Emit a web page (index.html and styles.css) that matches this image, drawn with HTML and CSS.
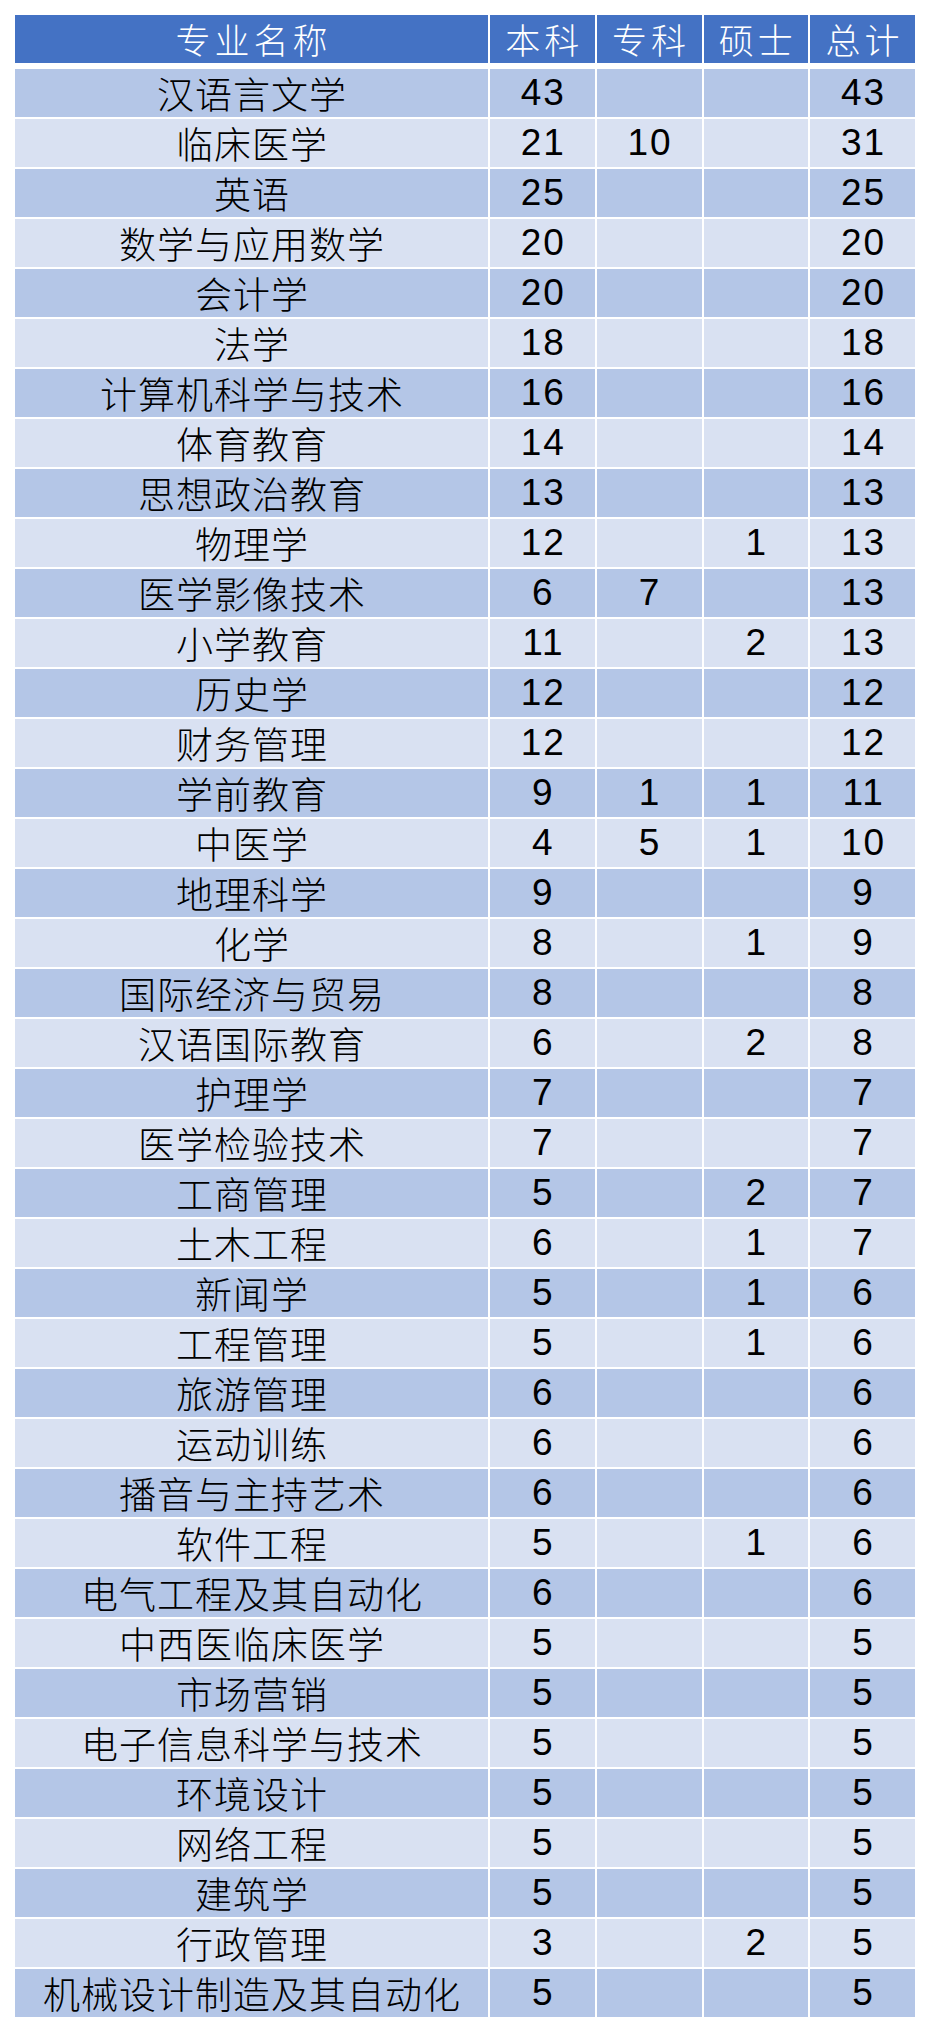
FILE: index.html
```html
<!DOCTYPE html>
<html lang="zh-CN">
<head>
<meta charset="utf-8">
<title>专业人数统计</title>
<link rel="stylesheet" href="styles.css">
</head>
<body>
<div class="table">
  <div class="cell head name">专业名称</div><div class="cell head">本科</div><div class="cell head">专科</div><div class="cell head">硕士</div><div class="cell head">总计</div>

  <div class="cell odd name">汉语言文学</div><div class="cell odd num">43</div><div class="cell odd num"></div><div class="cell odd num"></div><div class="cell odd num">43</div>
  <div class="cell even name">临床医学</div><div class="cell even num">21</div><div class="cell even num">10</div><div class="cell even num"></div><div class="cell even num">31</div>
  <div class="cell odd name">英语</div><div class="cell odd num">25</div><div class="cell odd num"></div><div class="cell odd num"></div><div class="cell odd num">25</div>
  <div class="cell even name">数学与应用数学</div><div class="cell even num">20</div><div class="cell even num"></div><div class="cell even num"></div><div class="cell even num">20</div>
  <div class="cell odd name">会计学</div><div class="cell odd num">20</div><div class="cell odd num"></div><div class="cell odd num"></div><div class="cell odd num">20</div>
  <div class="cell even name">法学</div><div class="cell even num">18</div><div class="cell even num"></div><div class="cell even num"></div><div class="cell even num">18</div>
  <div class="cell odd name">计算机科学与技术</div><div class="cell odd num">16</div><div class="cell odd num"></div><div class="cell odd num"></div><div class="cell odd num">16</div>
  <div class="cell even name">体育教育</div><div class="cell even num">14</div><div class="cell even num"></div><div class="cell even num"></div><div class="cell even num">14</div>
  <div class="cell odd name">思想政治教育</div><div class="cell odd num">13</div><div class="cell odd num"></div><div class="cell odd num"></div><div class="cell odd num">13</div>
  <div class="cell even name">物理学</div><div class="cell even num">12</div><div class="cell even num"></div><div class="cell even num">1</div><div class="cell even num">13</div>
  <div class="cell odd name">医学影像技术</div><div class="cell odd num">6</div><div class="cell odd num">7</div><div class="cell odd num"></div><div class="cell odd num">13</div>
  <div class="cell even name">小学教育</div><div class="cell even num">11</div><div class="cell even num"></div><div class="cell even num">2</div><div class="cell even num">13</div>
  <div class="cell odd name">历史学</div><div class="cell odd num">12</div><div class="cell odd num"></div><div class="cell odd num"></div><div class="cell odd num">12</div>
  <div class="cell even name">财务管理</div><div class="cell even num">12</div><div class="cell even num"></div><div class="cell even num"></div><div class="cell even num">12</div>
  <div class="cell odd name">学前教育</div><div class="cell odd num">9</div><div class="cell odd num">1</div><div class="cell odd num">1</div><div class="cell odd num">11</div>
  <div class="cell even name">中医学</div><div class="cell even num">4</div><div class="cell even num">5</div><div class="cell even num">1</div><div class="cell even num">10</div>
  <div class="cell odd name">地理科学</div><div class="cell odd num">9</div><div class="cell odd num"></div><div class="cell odd num"></div><div class="cell odd num">9</div>
  <div class="cell even name">化学</div><div class="cell even num">8</div><div class="cell even num"></div><div class="cell even num">1</div><div class="cell even num">9</div>
  <div class="cell odd name">国际经济与贸易</div><div class="cell odd num">8</div><div class="cell odd num"></div><div class="cell odd num"></div><div class="cell odd num">8</div>
  <div class="cell even name">汉语国际教育</div><div class="cell even num">6</div><div class="cell even num"></div><div class="cell even num">2</div><div class="cell even num">8</div>
  <div class="cell odd name">护理学</div><div class="cell odd num">7</div><div class="cell odd num"></div><div class="cell odd num"></div><div class="cell odd num">7</div>
  <div class="cell even name">医学检验技术</div><div class="cell even num">7</div><div class="cell even num"></div><div class="cell even num"></div><div class="cell even num">7</div>
  <div class="cell odd name">工商管理</div><div class="cell odd num">5</div><div class="cell odd num"></div><div class="cell odd num">2</div><div class="cell odd num">7</div>
  <div class="cell even name">土木工程</div><div class="cell even num">6</div><div class="cell even num"></div><div class="cell even num">1</div><div class="cell even num">7</div>
  <div class="cell odd name">新闻学</div><div class="cell odd num">5</div><div class="cell odd num"></div><div class="cell odd num">1</div><div class="cell odd num">6</div>
  <div class="cell even name">工程管理</div><div class="cell even num">5</div><div class="cell even num"></div><div class="cell even num">1</div><div class="cell even num">6</div>
  <div class="cell odd name">旅游管理</div><div class="cell odd num">6</div><div class="cell odd num"></div><div class="cell odd num"></div><div class="cell odd num">6</div>
  <div class="cell even name">运动训练</div><div class="cell even num">6</div><div class="cell even num"></div><div class="cell even num"></div><div class="cell even num">6</div>
  <div class="cell odd name">播音与主持艺术</div><div class="cell odd num">6</div><div class="cell odd num"></div><div class="cell odd num"></div><div class="cell odd num">6</div>
  <div class="cell even name">软件工程</div><div class="cell even num">5</div><div class="cell even num"></div><div class="cell even num">1</div><div class="cell even num">6</div>
  <div class="cell odd name">电气工程及其自动化</div><div class="cell odd num">6</div><div class="cell odd num"></div><div class="cell odd num"></div><div class="cell odd num">6</div>
  <div class="cell even name">中西医临床医学</div><div class="cell even num">5</div><div class="cell even num"></div><div class="cell even num"></div><div class="cell even num">5</div>
  <div class="cell odd name">市场营销</div><div class="cell odd num">5</div><div class="cell odd num"></div><div class="cell odd num"></div><div class="cell odd num">5</div>
  <div class="cell even name">电子信息科学与技术</div><div class="cell even num">5</div><div class="cell even num"></div><div class="cell even num"></div><div class="cell even num">5</div>
  <div class="cell odd name">环境设计</div><div class="cell odd num">5</div><div class="cell odd num"></div><div class="cell odd num"></div><div class="cell odd num">5</div>
  <div class="cell even name">网络工程</div><div class="cell even num">5</div><div class="cell even num"></div><div class="cell even num"></div><div class="cell even num">5</div>
  <div class="cell odd name">建筑学</div><div class="cell odd num">5</div><div class="cell odd num"></div><div class="cell odd num"></div><div class="cell odd num">5</div>
  <div class="cell even name">行政管理</div><div class="cell even num">3</div><div class="cell even num"></div><div class="cell even num">2</div><div class="cell even num">5</div>
  <div class="cell odd name">机械设计制造及其自动化</div><div class="cell odd num">5</div><div class="cell odd num"></div><div class="cell odd num"></div><div class="cell odd num">5</div>
</div>
</body>
</html>
```

FILE: styles.css
```css
html, body {
  margin: 0;
  padding: 0;
  background: #ffffff;
}

body {
  padding: 15px;
  font-family: "Noto Sans CJK SC", "Liberation Sans", sans-serif;
}

.table {
  display: grid;
  grid-template-columns: 473px repeat(4, 1fr);
  column-gap: 2px;
  row-gap: 2px;
  width: 900px;
}

.cell {
  height: 48px;
  display: flex;
  align-items: center;
  justify-content: center;
  color: #000000;
  font-size: 37px;
  font-weight: 300;
  line-height: 48px;
  letter-spacing: 1px;
  padding-left: 1px;
  white-space: nowrap;
}

.head {
  background: #4472c4;
  color: #ffffff;
  font-size: 35px;
  letter-spacing: 4px;
  padding-left: 4px;
  margin-bottom: 4px;
}

.odd {
  background: #b4c6e7;
}

.even {
  background: #d9e1f2;
}

.num {
  font-family: "Liberation Sans", "Noto Sans CJK SC", sans-serif;
  font-weight: 400;
  font-size: 37px;
  letter-spacing: 2px;
  padding-left: 2px;
}
```
